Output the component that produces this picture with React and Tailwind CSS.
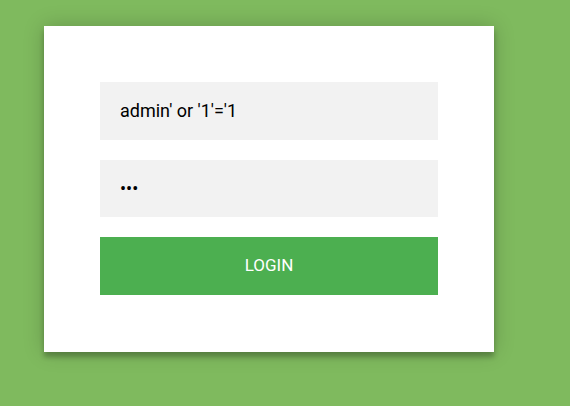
export default function App() {
  return (
    <div
      className="min-h-screen w-full bg-[#7fba5e] pt-[26px] pl-[44px]"
      style={{ fontFamily: "Roboto, 'Liberation Sans', sans-serif" }}
    >
      <form
        className="w-[450px] bg-white px-[56px] pt-[56px] pb-[57px] flex flex-col gap-[20px] shadow-[0_0_20px_rgba(0,0,0,0.2),0_5px_5px_rgba(0,0,0,0.24)]"
        onSubmit={(e) => e.preventDefault()}
      >
        <input
          type="text"
          readOnly
          value="admin' or '1'='1"
          className="h-[57.67px] w-full bg-[#f2f2f2] px-[20px] text-[18px] text-black outline-none"
        />
        <input
          type="password"
          readOnly
          value="abc"
          className="h-[57.67px] w-full bg-[#f2f2f2] px-[20px] text-[18px] text-black outline-none"
        />
        <button
          type="submit"
          className="h-[57.67px] w-full bg-[#4caf50] text-white text-[17px] uppercase"
        >
          Login
        </button>
      </form>
    </div>
  );
}
